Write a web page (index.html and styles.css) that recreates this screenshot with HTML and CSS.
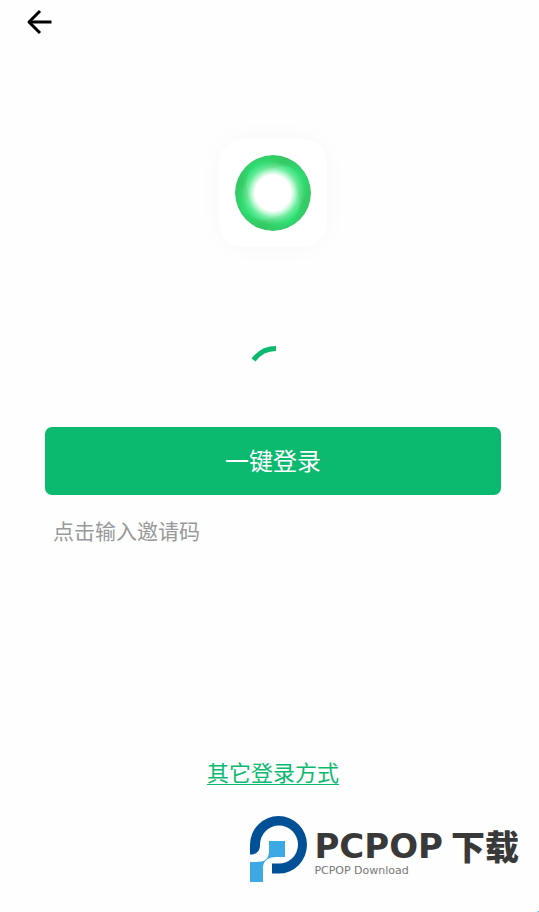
FILE: index.html
```html
<!DOCTYPE html>
<html lang="zh-CN">
<head>
<meta charset="utf-8">
<meta name="viewport" content="width=device-width, initial-scale=1">
<title>一键登录</title>
<link rel="stylesheet" href="styles.css">
</head>
<body>
<div class="page">
  <header class="topbar">
    <button class="back" type="button" aria-label="返回">
      <svg width="28" height="28" viewBox="0 0 28 28" fill="none" stroke="#000" stroke-width="3"><path d="M27.500 14H5"/><path d="M16 3 5 14l11 11" stroke-linejoin="round"/></svg>
    </button>
  </header>
  <main class="content">
    <div class="app-icon">
      <svg width="78" height="78" viewBox="0 0 78 78" aria-hidden="true">
        <defs>
          <radialGradient id="glow">
            <stop offset="0" stop-color="#fff"/>
            <stop offset=".47" stop-color="#fff"/>
            <stop offset=".56" stop-color="#fff" stop-opacity=".7"/>
            <stop offset=".68" stop-color="#fff" stop-opacity=".27"/>
            <stop offset=".84" stop-color="#fff" stop-opacity="0"/>
          </radialGradient>
          <radialGradient id="ring">
            <stop offset=".55" stop-color="#2dea76"/>
            <stop offset=".85" stop-color="#30df74"/>
            <stop offset="1" stop-color="#33cc6c"/>
          </radialGradient>
          <radialGradient id="shade" gradientUnits="userSpaceOnUse" cx="8" cy="30" r="26">
            <stop offset="0" stop-color="#36bd58" stop-opacity=".6"/>
            <stop offset="1" stop-color="#36c760" stop-opacity="0"/>
          </radialGradient>
          <clipPath id="disc"><circle cx="39" cy="39" r="38"/></clipPath>
          <path id="blade" d="M22 52Q0 26 28 2L0 0V62Z" fill="url(#shade)"/>
        </defs>
        <g clip-path="url(#disc)">
          <circle cx="39" cy="39" r="38" fill="url(#ring)"/>
          <use href="#blade"/>
          <use href="#blade" transform="rotate(90 39 39)"/>
          <use href="#blade" transform="rotate(180 39 39)"/>
          <use href="#blade" transform="rotate(270 39 39)"/>
          <circle cx="39" cy="39" r="38" fill="url(#glow)"/>
        </g>
      </svg>
    </div>
    <svg class="spinner" width="60" height="60" viewBox="0 0 60 60" role="img" aria-label="加载中"><path d="M10.500 17Q19 5.500 33 5.500" fill="none" stroke="#0bb96f" stroke-width="5"/></svg>
    <button class="login" type="button">一键登录</button>
    <input class="invite" type="text" aria-label="邀请码" placeholder="点击输入邀请码">
    <a class="other" href="#">其它登录方式</a>
  </main>
  <footer class="brand">
    <svg class="brand-mark" width="58" height="66" viewBox="0 0 58 66" aria-hidden="true">
      <path d="M0 38.500V28.800a28.500 28.800 0 1 1 28.500 28.800H22V47.600h6.500A19 19 0 1 0 10 28.800C10 35 7 38.500 0 38.500Z" fill="#005096"/>
      <path d="M19 25h16v16h-9c-8 0-13 4-13 11v14H0V46h6c9 0 13-3 13-11Z" fill="#3ca9e5"/>
    </svg>
    <div class="brand-text">
      <div class="brand-name"><span class="brand-latin">PCPOP</span><span class="brand-cjk">下载</span></div>
      <div class="brand-sub">PCPOP Download</div>
    </div>
  </footer>
  <span class="corner-dot"></span>
</div>
</body>
</html>
```
FILE: styles.css
```css
* { box-sizing: border-box; }
body {
  margin: 0;
  background: #fefefe;
  font-family: "Noto Sans CJK SC", sans-serif;
}
button, input { font-family: inherit; }
.page {
  position: relative;
  display: flex;
  flex-direction: column;
  min-height: 100vh;
}
.topbar {
  display: flex;
  align-items: center;
  height: 44px;
  padding: 0 24px;
}
.back {
  display: flex;
  padding: 0;
  border: 0;
  background: none;
}
.content {
  display: flex;
  flex-direction: column;
  align-items: center;
  padding: 95px 38px 0 45px;
}
.app-icon {
  display: grid;
  place-items: center;
  width: 108px;
  height: 108px;
  border-radius: 24px;
  background: #fff;
  box-shadow: 0 0 24px rgba(0, 0, 0, 0.03);
}
.spinner { margin-top: 96px; }
.login {
  width: 100%;
  height: 68px;
  margin-top: 24px;
  padding: 0 0 2px;
  border: 0;
  border-radius: 7px;
  background: #0bb96f;
  color: #fff;
  font-size: 24px;
  font-weight: 400;
  line-height: 36px;
}
.invite {
  width: 100%;
  height: 44px;
  margin-top: 13px;
  padding: 0 8px;
  border: 0;
  outline: 0;
  background: none;
  color: #333;
  font-size: 21px;
  font-weight: 400;
}
.invite::placeholder { color: #999; opacity: 1; }
.other {
  margin-top: 206px;
  border-bottom: 1px solid #0bb96f;
  color: #0bb96f;
  font-size: 22px;
  font-weight: 400;
  line-height: 26px;
  text-decoration: none;
}
.brand {
  display: flex;
  justify-content: flex-end;
  gap: 6px;
  margin-top: auto;
  padding: 0 20px 30px 0;
}
.brand-text { padding-top: 14px; }
.brand-name {
  display: flex;
  align-items: center;
  gap: 8px;
  height: 32px;
  color: #393939;
  line-height: 32px;
}
.brand-latin {
  font-family: "DejaVu Sans", sans-serif;
  font-size: 34px;
  font-weight: 700;
}
.brand-cjk {
  font-size: 34px;
  font-weight: 900;
}
.brand-sub {
  margin-top: 3px;
  color: #777;
  font-family: "DejaVu Sans", sans-serif;
  font-size: 11px;
  line-height: 12px;
}
.corner-dot {
  position: absolute;
  right: 0;
  bottom: 0;
  width: 1px;
  height: 1px;
  background: #1c9fd8;
}
```
